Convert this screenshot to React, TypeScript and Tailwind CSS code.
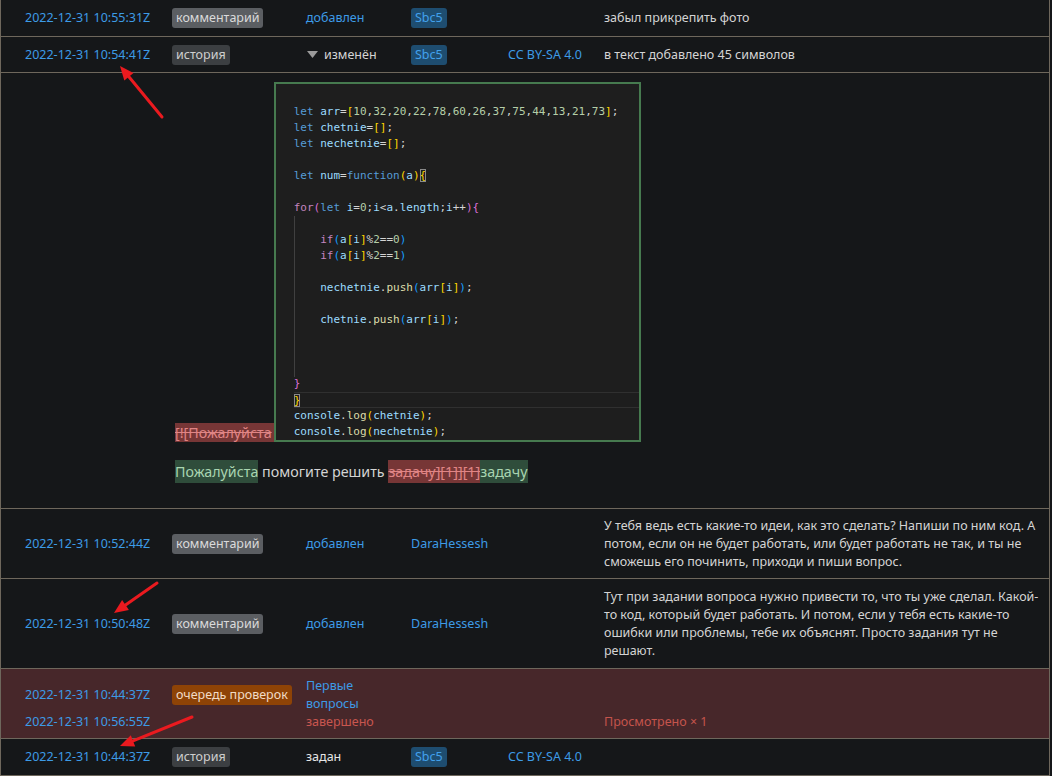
import React from "react";

const BORDER = "border-[#6e675c]";

type Tok = [string, string, boolean?];
const K = "#569cd6";
const V = "#9cdcfe";
const W = "#d4d4d4";
const N = "#b5cea8";
const G = "#ffd700";
const P = "#da70d6";
const B = "#179fff";
const C = "#c586c0";
const F = "#dcdcaa";

const nums = ["10", "32", "20", "22", "78", "60", "26", "37", "75", "44", "13", "21", "73"];
const arrLine: Tok[] = [["let", K], [" ", W], ["arr", V], ["=", W], ["[", G]];
nums.forEach((n, i) => {
  arrLine.push([n, N]);
  if (i < nums.length - 1) arrLine.push([",", W]);
});
arrLine.push(["]", G], [";", W]);

const codeLines: Tok[][] = [
  arrLine,
  [["let", K], [" ", W], ["chetnie", V], ["=", W], ["[", G], ["]", G], [";", W]],
  [["let", K], [" ", W], ["nechetnie", V], ["=", W], ["[", G], ["]", G], [";", W]],
  [],
  [["let", K], [" ", W], ["num", V], ["=", W], ["function", K], ["(", G], ["a", V], [")", G], ["{", G, true]],
  [],
  [["for", C], ["(", P], ["let", K], [" ", W], ["i", V], ["=", W], ["0", N], [";", W], ["i", V], ["<", W], ["a", V], [".", W], ["length", V], [";", W], ["i", V], ["++", W], [")", P], ["{", P]],
  [],
  [["    ", W], ["if", C], ["(", B], ["a", V], ["[", G], ["i", V], ["]", G], ["%", W], ["2", N], ["==", W], ["0", N], [")", B]],
  [["    ", W], ["if", C], ["(", B], ["a", V], ["[", G], ["i", V], ["]", G], ["%", W], ["2", N], ["==", W], ["1", N], [")", B]],
  [],
  [["    ", W], ["nechetnie", V], [".", W], ["push", F], ["(", B], ["arr", V], ["[", G], ["i", V], ["]", G], [")", B], [";", W]],
  [],
  [["    ", W], ["chetnie", V], [".", W], ["push", F], ["(", B], ["arr", V], ["[", G], ["i", V], ["]", G], [")", B], [";", W]],
  [],
  [],
  [],
  [["}", P]],
  [["}", G, true]],
  [["console", V], [".", W], ["log", F], ["(", G], ["chetnie", V], [")", G], [";", W]],
  [["console", V], [".", W], ["log", F], ["(", G], ["nechetnie", V], [")", G], [";", W]],
];

function CodeBox() {
  return (
    <div className="relative w-[367px] h-[360px] border-2 border-[#467a4f] bg-[#1e1e1e] pt-[20px] pl-[18px] shrink-0">
      <div className="absolute left-[18px] top-[132px] h-[161px] w-px bg-[#404040]" />
      <div
        className="whitespace-pre text-[11px] leading-[16px]"
        style={{ fontFamily: '"DejaVu Sans Mono", monospace' }}
      >
        {codeLines.map((line, i) => (
          <div
            key={i}
            className={i === 18 ? "h-[16px] border-y border-[#303030]" : "h-[16px]"}
          >
            {line.length === 0 ? " " : null}
            {line.map(([t, c, boxed], j) => (
              <span
                key={j}
                style={{ color: c }}
                className={boxed ? "outline outline-1 outline-[#8a8a8a] -outline-offset-1" : ""}
              >
                {t}
              </span>
            ))}
          </div>
        ))}
      </div>
    </div>
  );
}

function Badge({ children, cls }: { children: React.ReactNode; cls: string }) {
  return (
    <span className={`inline-block rounded-[3px] px-[4px] h-[20px] leading-[20px] ${cls}`}>
      {children}
    </span>
  );
}

const gray = "bg-[#5b5e62] text-[#dadada]";
const dark = "bg-[#3c3f42] text-[#cfcfcf]";
const blue = "bg-[#1e4d70] text-[#42a1ec]";
const link = "text-[#3d9be6]";
const txt = "text-[#d4d4d4]";

const GRID = "grid grid-cols-[169px_134px_107px_96px_96px_1fr]";

function Row({
  date,
  badge,
  c3,
  c4,
  c5,
  c6,
  pad = "py-2",
}: {
  date: string;
  badge: React.ReactNode;
  c3: React.ReactNode;
  c4?: React.ReactNode;
  c5?: React.ReactNode;
  c6?: React.ReactNode;
  pad?: string;
}) {
  return (
    <div className={`${GRID} items-center border-b ${BORDER} ${pad}`}>
      <div className={`pl-[24px] ${link}`}>{date}</div>
      <div className="pl-[2px] flex items-center min-h-[20px]">{badge}</div>
      <div className="pl-[2px]">{c3}</div>
      <div>{c4}</div>
      <div className="pl-[1px]">{c5}</div>
      <div className={`pl-[1px] ${txt}`}>{c6}</div>
    </div>
  );
}

function Lines({ lines }: { lines: string[] }) {
  return (
    <div>
      {lines.map((l, i) => (
        <div key={i} className="whitespace-nowrap">
          {l}
        </div>
      ))}
    </div>
  );
}

function Arrow({ tail, base, h1, h2, tip }: { tail: [number, number]; base: [number, number]; h1: [number, number]; h2: [number, number]; tip: [number, number] }) {
  return (
    <g>
      <line x1={tail[0]} y1={tail[1]} x2={base[0]} y2={base[1]} stroke="#ea1a1f" strokeWidth={3} strokeLinecap="round" />
      <polygon points={`${tip[0]},${tip[1]} ${h1[0]},${h1[1]} ${h2[0]},${h2[1]}`} fill="#ea1a1f" />
    </g>
  );
}

export default function App() {
  return (
    <div
      className="relative min-h-screen w-full bg-[#151719] text-[12.5px] leading-[18px]"
      style={{ fontFamily: '"Noto Sans", "Open Sans", sans-serif' }}
    >
      <div className={`w-[1050px] border-x ${BORDER}`}>
        <Row
          date="2022-12-31 10:55:31Z"
          badge={<Badge cls={gray}>комментарий</Badge>}
          c3={<span className={link}>добавлен</span>}
          c4={<Badge cls={blue}>Sbc5</Badge>}
          c6="забыл прикрепить фото"
        />
        <Row
          pad="pt-2 pb-[7px]"
          date="2022-12-31 10:54:41Z"
          badge={<Badge cls={dark}>история</Badge>}
          c3={
            <span className={`${txt} inline-flex items-center`}>
              <svg width="12" height="8" viewBox="0 0 12 8" className="mr-[5px] ml-[1px]">
                <polygon points="0,0 11,0 5.5,7" fill="#9a9a9a" />
              </svg>
              изменён
            </span>
          }
          c4={<Badge cls={blue}>Sbc5</Badge>}
          c5={<span className={link}>CC BY-SA 4.0</span>}
          c6="в текст добавлено 45 символов"
        />
        {/* diff row */}
        <div className={`${GRID} border-b ${BORDER}`}>
          <div />
          <div className="col-span-5 pl-[5px] pt-[9px] pb-[24px] text-[14.3px]">
            <div className="flex items-end">
              <span className="bg-[#773636] text-[#e08585] line-through leading-[19px] pr-[2px]">[![Пожалуйста</span>
              <CodeBox />
            </div>
            <div className="mt-[18px] leading-[24px]">
              <span className="bg-[#2f4d3b] text-[#a9d5b1] py-[2px]">Пожалуйста</span>
              <span className={txt}> помогите решить </span>
              <span className="bg-[#773636] text-[#e08585] line-through py-[2px]">задачу][1]][1]</span>
              <span className="bg-[#2f4d3b] text-[#a9d5b1] py-[2px]">задачу</span>
            </div>
          </div>
        </div>
        <Row
          pad="pt-2 pb-[7px]"
          date="2022-12-31 10:52:44Z"
          badge={<Badge cls={gray}>комментарий</Badge>}
          c3={<span className={link}>добавлен</span>}
          c4={<span className={link}>DaraHessesh</span>}
          c6={
            <Lines
              lines={[
                "У тебя ведь есть какие-то идеи, как это сделать? Напиши по ним код. А",
                "потом, если он не будет работать, или будет работать не так, и ты не",
                "сможешь его починить, приходи и пиши вопрос.",
              ]}
            />
          }
        />
        <Row
          pad="pt-[9px] pb-[8px]"
          date="2022-12-31 10:50:48Z"
          badge={<Badge cls={gray}>комментарий</Badge>}
          c3={<span className={link}>добавлен</span>}
          c4={<span className={link}>DaraHessesh</span>}
          c6={
            <Lines
              lines={[
                "Тут при задании вопроса нужно привести то, что ты уже сделал. Какой-",
                "то код, который будет работать. И потом, если у тебя есть какие-то",
                "ошибки или проблемы, тебе их объяснят. Просто задания тут не",
                "решают.",
              ]}
            />
          }
        />
        {/* review row */}
        <div className={`${GRID} border-b ${BORDER} bg-[#47272a] pt-[8px] pb-[7px]`}>
          <div className={`pl-[24px] ${link} grid grid-rows-[36px_18px] items-center`}>
            <div>2022-12-31 10:44:37Z</div>
            <div>2022-12-31 10:56:55Z</div>
          </div>
          <div className="pl-[2px] grid grid-rows-[36px_18px] items-center">
            <div className="flex">
              <Badge cls="bg-[#8e4306] text-[#f2dcc6]">очередь проверок</Badge>
            </div>
          </div>
          <div className="pl-[2px]">
            <div className={link}>Первые</div>
            <div className={link}>вопросы</div>
            <div className="text-[#c9564f]">завершено</div>
          </div>
          <div />
          <div />
          <div className="pl-[1px] grid grid-rows-[36px_18px] items-center">
            <div />
            <div className="text-[#c4544c]">Просмотрено × 1</div>
          </div>
        </div>
        <Row
          date="2022-12-31 10:44:37Z"
          badge={<Badge cls={dark}>история</Badge>}
          c3={<span className="text-[#e6e6e6]">задан</span>}
          c4={<Badge cls={blue}>Sbc5</Badge>}
          c5={<span className={link}>CC BY-SA 4.0</span>}
        />
      </div>
      <svg className="pointer-events-none absolute left-0 top-0" width="1052" height="776">
        <Arrow tail={[162, 117]} base={[128.9, 76.8]} h1={[133.5, 73]} h2={[124.3, 80.6]} tip={[120, 66]} />
        <Arrow tail={[157, 583]} base={[125.5, 605]} h1={[128.9, 609.9]} h2={[122.1, 600.1]} tip={[114, 613]} />
        <Arrow tail={[192, 717]} base={[133, 740.8]} h1={[135.2, 746.4]} h2={[130.8, 735.2]} tip={[120, 746]} />
      </svg>
    </div>
  );
}
